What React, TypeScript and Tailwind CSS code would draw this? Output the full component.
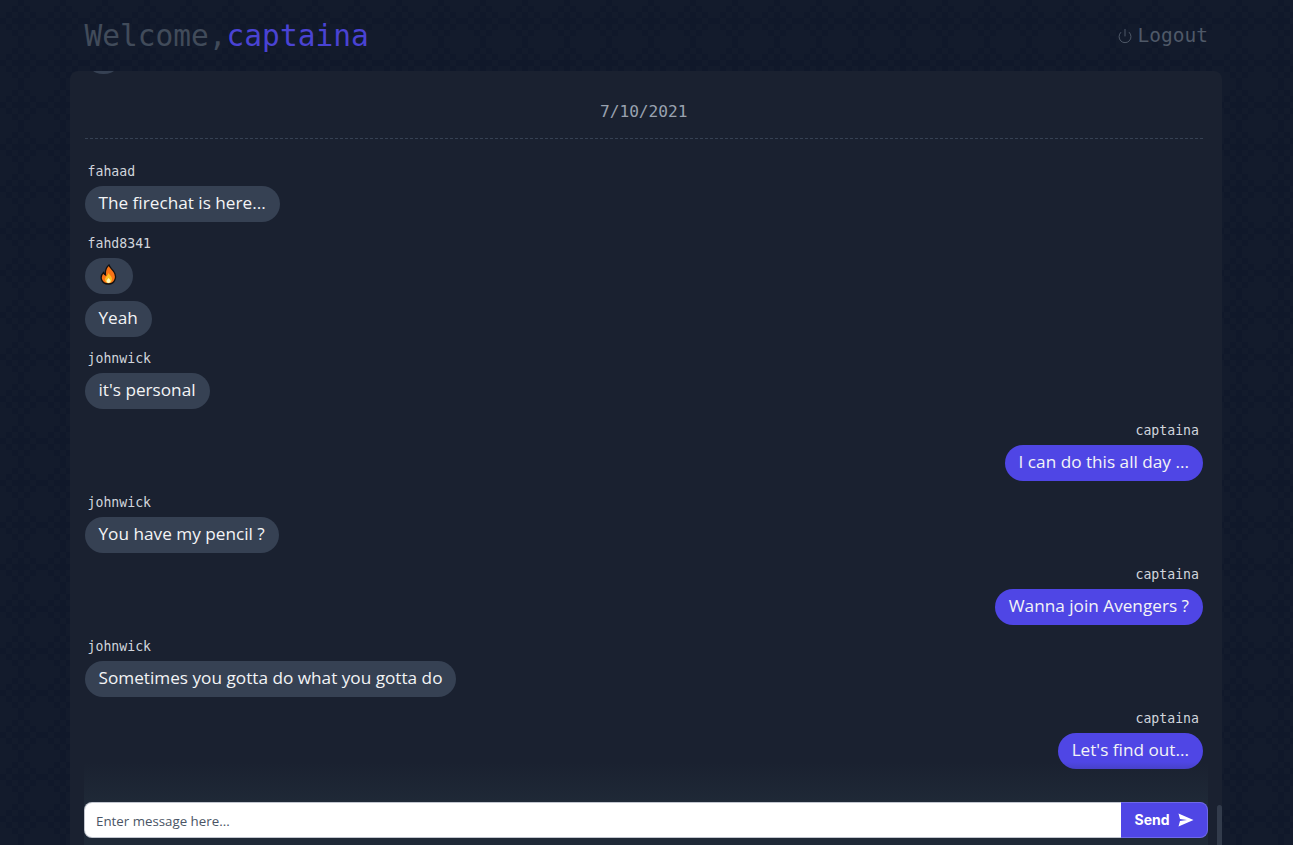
import { ReactNode } from "react"
import { Power } from "lucide-react"

type Message = {
	user: string,
	texts: ReactNode[],
	own?: boolean
}

const monoFont = "font-['DejaVu_Sans_Mono',monospace]"
const bubbleFont = "font-['Open_Sans',sans-serif]"

const FlameIcon = () => (
	<svg width="17" height="21" viewBox="0 0 17 21">
		<path d="M9 1 C10 4 12 5 14 8 C16 11 16 13 15 15.500 C14 18.500 11.500 20 8.500 20 C5 20 2.500 18.500 1.500 15.500 C0.500 12.500 2 10 3.500 8.500 C4 10 4.500 10.500 5.500 11 C5 7 6 3.500 9 1 Z" fill="#f97316" stroke="#111" strokeWidth="1.300" />
		<path d="M8.500 9 C9.500 11 12 12.500 12 15 C12 17.500 10.500 19 8.500 19 C6.500 19 5 17.500 5 15.500 C5 13 7.500 12 8.500 9 Z" fill="#fbbf24" />
		<path d="M8.500 14 C9.500 15 10.500 16 10.500 17 C10.500 18.200 9.500 19 8.500 19 C7.500 19 6.500 18.200 6.500 17 C6.500 16 7.500 15.500 8.500 14 Z" fill="#fef9c3" />
	</svg>
)

const SendIcon = () => (
	<svg width="16" height="14" viewBox="0 0 16 14" fill="currentColor">
		<path d="M0.500 0.500 L15.500 7 L0.500 13.500 L2 8 L9 7 L2 6 Z" />
	</svg>
)

const MESSAGES: Message[] = [
	{ user: "fahaad", texts: ["The firechat is here..."] },
	{ user: "fahd8341", texts: [<span className="flex h-[34px] w-[20px] items-center justify-center pb-[1px]"><FlameIcon /></span>, "Yeah"] },
	{ user: "johnwick", texts: ["it's personal"] },
	{ user: "captaina", texts: ["I can do this all day ..."], own: true },
	{ user: "johnwick", texts: ["You have my pencil ?"] },
	{ user: "captaina", texts: ["Wanna join Avengers ?"], own: true },
	{ user: "johnwick", texts: ["Sometimes you gotta do what you gotta do"] },
	{ user: "captaina", texts: ["Let's find out..."], own: true }
]

// 7x7 blocks of 6px, one tile of the wallpaper
const TILE = [
	"...#...",
	"..#.#..",
	".#.#.#.",
	"#.###.#",
	".#.#.#.",
	"..#.#..",
	"...#..."
]

const PatternBackground = () => (
	<svg className="absolute inset-0 h-full w-full" aria-hidden="true">
		<defs>
			<pattern id="bg-tile" width="42" height="42" patternUnits="userSpaceOnUse">
				<rect width="42" height="42" fill="#131b2c" />
				{TILE.map((row, y) =>
					row.split("").map((cell, x) =>
						cell === "#" ? <rect key={`${x}-${y}`} x={x * 6} y={y * 6} width="6" height="6" fill="#10182a" /> : null
					)
				)}
			</pattern>
		</defs>
		<rect width="100%" height="100%" fill="url(#bg-tile)" />
	</svg>
)

const ChatMessage = ({ message }: { message: Message }) => (
	<div className={message.own ? "flex flex-col items-end" : "flex flex-col items-start"}>
		<div className={`${monoFont} mb-1 h-5 pl-[3px] pr-1 text-[13.200px] leading-5 text-gray-300`}>{message.user}</div>
		<div className="flex flex-col gap-[7px]">
			{message.texts.map((text, index) => (
				<div key={index} className={message.own ? "flex justify-end" : "flex"}>
					<div
						className={`${bubbleFont} h-9 rounded-[18px] px-3.5 text-[17.200px] leading-[34px] text-gray-100 ${message.own ? "bg-[#4f46e5]" : "bg-gray-700"}`}
					>
						{text}
					</div>
				</div>
			))}
		</div>
	</div>
)

const App = () => {
	return (
		<div className="relative h-[845px] overflow-hidden bg-gray-900">
			<PatternBackground />
			<div className="relative ml-[70px] flex h-full w-[1152px] flex-col">
				<header className="flex h-[71px] items-center justify-between pl-[14.500px] pr-[14px] pt-[2px]">
					<h1 className={`${monoFont} text-[29.500px] text-[#414b5a]`}>
						Welcome,<span className="text-[#4a43d4]">captaina</span>
					</h1>
					<button className={`${monoFont} -mt-[2px] flex items-center gap-[5px] text-[19.500px] text-[#4f5968]`}>
						<Power size={16} strokeWidth={1.500} />
						Logout
					</button>
				</header>

				<main className="relative flex min-h-0 flex-1 flex-col overflow-hidden rounded-t-lg bg-[#1a2130]">
					<div className="ml-[14.500px] -mt-[33px] h-9 w-[37px] shrink-0 rounded-[18px] bg-gray-700" />
					<div className="flex min-h-0 flex-1 flex-col pl-[14.500px] pr-[19px]">
						<div className={`${monoFont} flex h-[65px] items-center justify-center border-b border-dashed border-gray-700 pt-[13px] text-[16.200px] text-gray-400`}>
							7/10/2021
						</div>
						<div className="mt-[23px] flex flex-col gap-[12px]">
							{MESSAGES.map((message, index) => (
								<ChatMessage key={index} message={message} />
							))}
						</div>
					</div>
					<form className="relative -mt-[76px] ml-[14px] mr-[14px] flex h-[83px] items-end bg-gradient-to-b from-transparent to-[#1f2937] to-50% pb-[7px]">
						<div className="flex h-9 w-full">
							<input
								className="min-w-0 flex-1 rounded-l-lg border border-r-0 border-gray-400/60 bg-white pl-[11px] pt-[3px] font-['Open_Sans',sans-serif] text-[13.300px] text-gray-600 placeholder:text-gray-600 outline-none"
								placeholder="Enter message here..."
							/>
							<button type="button" className="flex w-[87px] items-center justify-center gap-2 rounded-r-lg border border-l-0 border-[#6f68ea] bg-[#4f46e5] font-['Inter',sans-serif] text-[14px] font-bold text-white">
								<span className="mb-[2px]">Send</span>
								<SendIcon />
							</button>
						</div>
					</form>
					<div className="absolute bottom-0 right-0 h-10 w-[5px] rounded-t-full bg-gray-600/50" />
				</main>
			</div>
		</div>
	)
}

export default App
